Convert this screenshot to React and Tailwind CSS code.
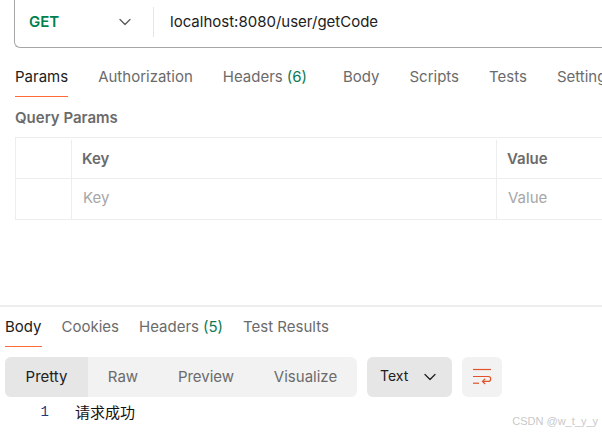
import React from 'react';
import { ChevronDown } from 'lucide-react';

const requestTabs = [
  { label: 'Params', active: true },
  { label: 'Authorization' },
  { label: 'Headers', count: '(6)' },
  { label: 'Body', gap: 'ml-[6px]' },
  { label: 'Scripts' },
  { label: 'Tests' },
  { label: 'Settings' },
];

const responseTabs = [
  { label: 'Body', active: true },
  { label: 'Cookies' },
  { label: 'Headers', count: '(5)' },
  { label: 'Test Results' },
];

const Tab = ({ tab, height }) => (
  <div
    className={`relative flex shrink-0 items-center whitespace-nowrap ${height} ${tab.gap || ''} ${
      tab.active ? 'text-[#212121]' : 'text-[#6b6b6b]'
    }`}
  >
    {tab.label}
    {tab.count && <span className="ml-1 text-[#0b7a55]">{tab.count}</span>}
    {tab.active && <div className="absolute right-0 bottom-0 left-0 h-px bg-[#ff6c37]" />}
  </div>
);

const WrapIcon = () => (
  <svg width="20" height="18" viewBox="0 0 20 18" fill="none" stroke="#e0532b" strokeWidth="1.2">
    <path d="M1 1.5H19" />
    <path d="M1 8.5H16.5C18 8.5 18.7 9.6 18.7 10.9C18.7 12.3 17.8 13.4 16.3 13.4H10.5" />
    <path d="M13.2 10.8L10.5 13.4L13.2 16" />
    <path d="M1 15.2H7" />
  </svg>
);

const App = () => {
  return (
    <div className="relative flex h-[432px] w-[602px] flex-col overflow-hidden bg-white font-['Inter',sans-serif] text-[15px]">
      {/* url bar */}
      <div className="ml-[14px] flex h-[48px] shrink-0 items-center rounded-bl-[6px] border-b border-l border-[#a6a6a6] pb-[3px]">
        <div className="flex w-[138px] shrink-0 items-center pl-[14px]">
          <span className="w-[86px] font-semibold text-[#007f4e]">GET</span>
          <ChevronDown className="h-[20px] w-[20px] text-[#5a5a5a]" strokeWidth={1.5} />
        </div>
        <div className="h-[30px] w-px bg-[#e6e6e6]" />
        <span className="ml-[16px] text-[#212121]">localhost:8080/user/getCode</span>
      </div>

      <div className="ml-[15px] flex shrink-0 gap-[30px]">
        {requestTabs.map((tab) => (
          <Tab key={tab.label} tab={tab} height="h-[49px] pt-[9px]" />
        ))}
      </div>

      <div className="ml-[15px] flex h-[40px] shrink-0 items-center pt-[2px] font-semibold text-[#6b6b6b]">Query Params</div>

      {/* params table */}
      <div className="ml-[15px] flex h-[83px] shrink-0 flex-col border-y border-l border-[#ededed]">
        <div className="flex h-[41px] shrink-0 border-b border-[#ededed] pt-[2px] font-semibold text-[#6b6b6b]">
          <div className="w-[55px] shrink-0" />
          <div className="flex w-[425px] shrink-0 items-center border-l border-[#ededed] pl-[10px]">Key</div>
          <div className="flex flex-1 items-center border-l border-[#ededed] pl-[10px]">Value</div>
        </div>
        <div className="flex flex-1 text-[#a6a6a6]">
          <div className="w-[55px] shrink-0" />
          <div className="flex w-[425px] shrink-0 items-center border-l border-[#ededed] pb-[1px] pl-[11px]">Key</div>
          <div className="flex flex-1 items-center border-l border-[#ededed] pb-[1px] pl-[11px]">Value</div>
        </div>
      </div>

      {/* response */}
      <div className="mt-[85px] h-[2px] shrink-0 bg-[#ededed]" />
      <div className="ml-[5px] flex shrink-0 gap-[20px]">
        {responseTabs.map((tab) => (
          <Tab key={tab.label} tab={tab} height="h-[40px]" />
        ))}
      </div>

      <div className="mt-[10px] ml-[5px] flex h-[40px] shrink-0 gap-[10px]">
        <div className="flex w-[352px] overflow-hidden rounded-[6px] bg-[#f2f2f2] text-[#6b6b6b]">
          <div className="flex w-[83px] items-center justify-center bg-[#e6e6e6] text-[#212121]">Pretty</div>
          <div className="flex w-[70px] items-center justify-center">Raw</div>
          <div className="flex w-[96px] items-center justify-center">Preview</div>
          <div className="flex w-[103px] items-center justify-center">Visualize</div>
        </div>
        <div className="flex w-[85px] items-center rounded-[6px] bg-[#e6e6e6] pl-[13px] text-[14px] text-[#212121]">
          <span className="-mt-[3px] w-[40px]">Text</span>
          <ChevronDown className="h-[20px] w-[20px]" strokeWidth={1.5} />
        </div>
        <div className="flex w-[40px] items-center justify-center rounded-[6px] bg-[#f2f2f2]">
          <WrapIcon />
        </div>
      </div>

      <div className="flex h-[30px] shrink-0 items-center">
        <span className="w-[75px] pr-[26px] text-right font-['Liberation_Mono',monospace] text-[14px] text-[#1f3a7a]">1</span>
        <span className="font-['Noto_Sans_CJK_SC',sans-serif] text-[#111111]">请求成功</span>
      </div>

      <div className="absolute right-[4px] bottom-[3px] font-['Liberation_Sans',sans-serif] text-[11px] text-[#c9c9c9]">CSDN @w_t_y_y</div>
    </div>
  );
};

export default App;
